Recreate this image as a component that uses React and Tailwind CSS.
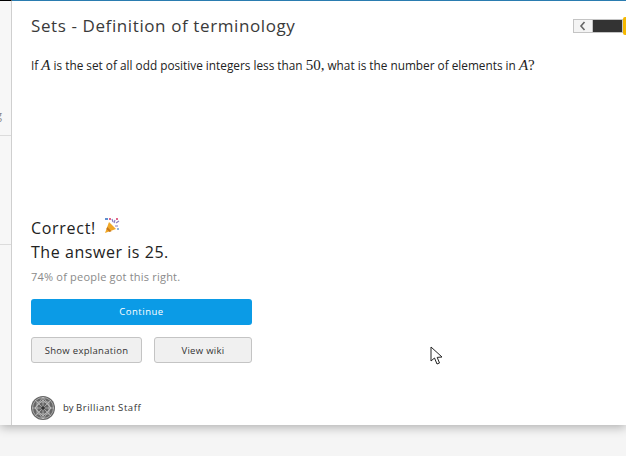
const Party = () => (
  <svg width="16" height="16" viewBox="0 0 16 16" className="ml-[8px] mt-[-4px]">
    <path d="M1 15 L5 4 L12 11 Z" fill="#f0a828" />
    <path d="M3.2 9 L7.5 13.2 L5.6 14 L2.4 11 Z" fill="#c9761a" />
    <path d="M8 1 l1 3 M11 2 l-1 3 M15 3 l-3 2 M14 8 l-3 0" stroke="#8a7fc0" strokeWidth="1.2" />
    <rect x="1" y="0" width="3" height="2" fill="#5f8fd0" />
    <rect x="5" y="0" width="2" height="2" fill="#e0668a" />
    <rect x="12" y="0" width="2" height="2" fill="#e0668a" />
    <rect x="13" y="10" width="2" height="2" fill="#8fb8e0" />
  </svg>
);

const Avatar = () => (
  <svg width="24" height="24" viewBox="0 0 24 24" className="shrink-0">
    <circle cx="12" cy="12" r="12" fill="#666" />
    <g fill="none" stroke="#c4c4c4" strokeWidth="0.7">
      <circle cx="12" cy="12" r="10.5" />
      <path d="M12 1 L12 23 M1 12 L23 12 M4 4 L20 20 M20 4 L4 20" />
      <path d="M12 4 L20 12 L12 20 L4 12 Z" />
      <path d="M6 6 L18 6 L18 18 L6 18 Z" />
      <path d="M12 1 L4 12 L12 23 L20 12 Z" />
    </g>
    <circle cx="12" cy="12" r="1.8" fill="#333" />
  </svg>
);

const Cursor = () => (
  <svg width="13" height="20" viewBox="0 0 13 20" className="absolute left-[430px] top-[346px]">
    <path d="M1 1 L1 15 L4.5 12 L7 18 L9.5 17 L7.2 11.4 L12 11 Z" fill="#fff" stroke="#222" strokeWidth="1" />
  </svg>
);

const Math = ({ children, italic }) => (
  <span className={`font-['Liberation_Serif',serif] text-[15px] ${italic ? "italic" : ""}`}>{children}</span>
);

export default function App() {
  return (
    <div className="relative w-[626px] h-[456px] overflow-hidden bg-[#f5f5f5] font-['Open_Sans',sans-serif]">
      <div className="flex h-[425px] bg-white shadow-[0_2px_10px_rgba(0,0,0,0.3)]">
        <div className="w-3 shrink-0 border-r border-t border-r-[#cfcfcf] border-t-black bg-[#f7f7f7] flex flex-col">
          <div className="h-[135px] border-b border-[#dcdcdc] flex items-end pb-[14px] overflow-hidden">
            <span className="text-[11px] leading-[13px] text-[#888] ml-[-4px]">g</span>
          </div>
          <div className="h-[109px] border-b border-[#dcdcdc]" />
        </div>
        <div className="flex-1 min-w-0 border-t border-[#2a7cb0] pl-[19px] flex flex-col">
          <div className="flex items-center h-[49px] pt-[1px]">
            <h1 className="text-[17px] leading-[24px] tracking-[0.6px] text-[#3a3a3a]">Sets - Definition of terminology</h1>
            <div className="ml-auto flex items-center mr-[-1px]">
              <div className="w-[20px] h-[14px] border border-[#c4c4c4] bg-[#f4f4f4] flex items-center justify-center">
                <svg width="8" height="10" viewBox="0 0 8 10"><path d="M5.5 1 L2 5 L5.5 9" fill="none" stroke="#666" strokeWidth="1.6" /></svg>
              </div>
              <div className="w-[30px] h-[14px] bg-[#333] border border-[#c4c4c4] border-l-0" />
              <div className="w-[4px] h-[18px] bg-[#f5b800] rounded-l-[2px]" />
            </div>
          </div>
          <p className="mt-[4px] text-[11.8px] leading-[22px] text-[#222] whitespace-nowrap">
            If <Math italic>A</Math> is the set of all odd positive integers less than <Math>50,</Math> what is the number of elements in <Math italic>A</Math><Math>?</Math>
          </p>
          <div className="mt-[140px] flex items-center">
            <span className="text-[16px] leading-[24px] tracking-[0.7px] text-[#222]">Correct!</span>
            <Party />
          </div>
          <div className="text-[16px] leading-[24px] tracking-[0.55px] text-[#222]">The answer is 25.</div>
          <div className="mt-[4px] text-[11px] leading-[18px] tracking-[0.2px] text-[#8a8a8a]">74% of people got this right.</div>
          <button className="mt-[13px] w-[221px] h-[26px] rounded-[3px] bg-[#0b9be6] text-white text-[9.5px] tracking-[0.5px]">Continue</button>
          <div className="mt-[12px] w-[221px] flex justify-between">
            <button className="w-[111px] h-[26px] rounded-[3px] border border-[#c4c4c4] bg-[#f0f0f0] text-[#333] text-[9.5px] tracking-[0.3px] pt-[2px]">Show explanation</button>
            <button className="w-[98px] h-[26px] rounded-[3px] border border-[#c4c4c4] bg-[#f0f0f0] text-[#333] text-[9.5px] tracking-[0.3px] pt-[2px]">View wiki</button>
          </div>
          <div className="mt-[33px] flex items-center gap-[8px]">
            <Avatar />
            <span className="text-[9.5px] text-[#333]">by <span className="font-medium tracking-[0.55px]">Brilliant Staff</span></span>
          </div>
        </div>
      </div>
      <Cursor />
    </div>
  );
}
